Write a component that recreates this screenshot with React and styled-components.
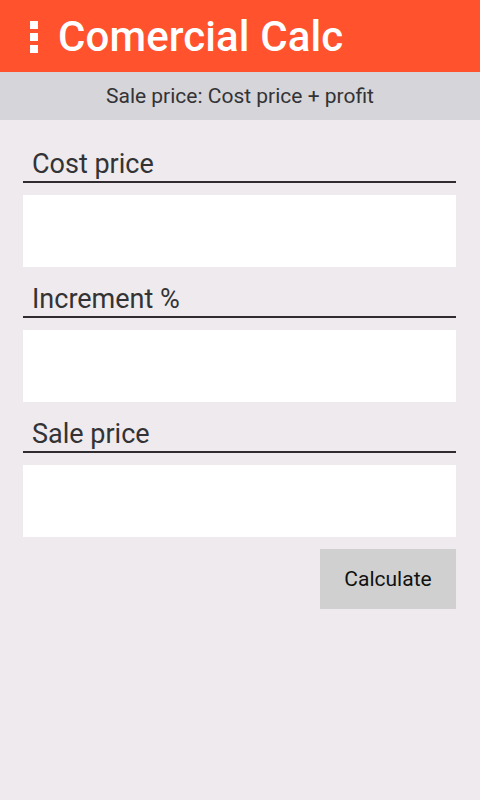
import React from "react";
import styled, { createGlobalStyle } from "styled-components";

const Global = createGlobalStyle`
  html, body { margin: 0; padding: 0; }
  body { background: #eeeaed; font-family: Roboto, "Noto Sans", sans-serif; }
  #root { min-height: 800px; }
`;

const Page = styled.div`
  width: 480px;
  min-height: 800px;
  background: #eeeaed;
`;

const AppBar = styled.header`
  height: 72px;
  background: #ff522d;
  display: flex;
  align-items: center;
  padding-left: 30px;
  box-sizing: border-box;
`;

const Dots = styled.div`
  display: flex;
  flex-direction: column;
  gap: 4px;
  margin-right: 20px;
  margin-top: 1px;
`;

const Dot = styled.span`
  width: 8px;
  height: 8px;
  background: #ffffff;
  display: block;
`;

const Title = styled.h1`
  margin: 0;
  color: #ffffff;
  font-size: 42px;
  font-weight: 500;
  letter-spacing: 0.1px;
`;

const SubBar = styled.div`
  height: 48px;
  background: #d6d5d9;
  display: flex;
  align-items: center;
  justify-content: center;
  color: #333335;
  font-size: 21px;
`;

const Form = styled.div`
  padding: 0 24px 0 23px;
  display: flex;
  flex-direction: column;
  margin-top: 28px;
`;

const Field = styled.div`
  display: flex;
  flex-direction: column;
  margin-bottom: 16px;
`;

const Label = styled.div`
  font-size: 27px;
  color: #333335;
  padding-left: 9px;
  line-height: 32px;
  border-bottom: 2px solid #2f2b2f;
  padding-bottom: 1px;
`;

const Input = styled.input`
  margin-top: 12px;
  height: 72px;
  border: none;
  background: #ffffff;
  box-sizing: border-box;
  outline: none;
  font-size: 22px;
  font-family: inherit;
  padding: 0 10px;
`;

const Actions = styled.div`
  display: flex;
  justify-content: flex-end;
  margin-top: -4px;
`;

const Button = styled.button`
  width: 136px;
  height: 60px;
  background: #d0d0d0;
  border: none;
  color: #111111;
  font-size: 21px;
  font-family: Roboto, "Noto Sans", sans-serif;
  padding: 0;
`;

export default function App() {
  const fields = ["Cost price", "Increment %", "Sale price"];
  return (
    <Page>
      <Global />
      <AppBar>
        <Dots>
          <Dot />
          <Dot />
          <Dot />
        </Dots>
        <Title>Comercial Calc</Title>
      </AppBar>
      <SubBar>Sale price: Cost price + profit</SubBar>
      <Form>
        {fields.map((f) => (
          <Field key={f}>
            <Label>{f}</Label>
            <Input type="text" />
          </Field>
        ))}
        <Actions>
          <Button>Calculate</Button>
        </Actions>
      </Form>
    </Page>
  );
}
